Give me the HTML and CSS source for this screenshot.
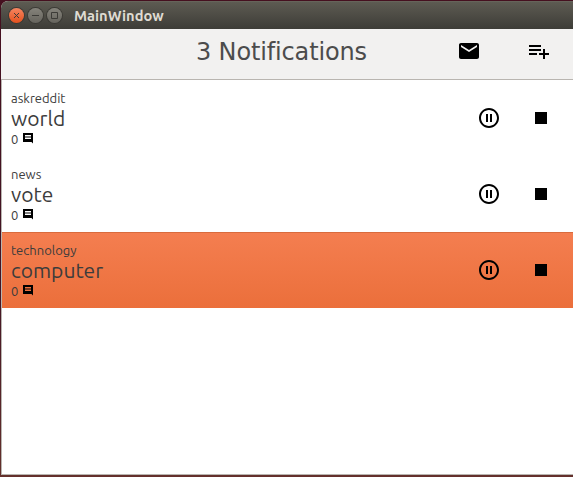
FILE: index.html
```html
<!DOCTYPE html>
<html lang="en">
<head>
<meta charset="utf-8">
<title>MainWindow</title>
<link rel="stylesheet" href="styles.css">
</head>
<body>
<svg class="defs" width="0" height="0">
  <symbol id="comment" viewBox="0 0 12 12"><path fill-rule="evenodd" d="M1 1h10v10.500L9.500 10H1zM3 3v1h6V3zM3 4.500v1h6v-1zM3 6v1h6V6z"/></symbol>
  <symbol id="pause" viewBox="0 0 24 24"><path d="M9 16h2V8H9v8zm3-14C6.480 2 2 6.480 2 12s4.480 10 10 10 10-4.480 10-10S17.520 2 12 2zm0 18c-4.410 0-8-3.590-8-8s3.590-8 8-8 8 3.590 8 8-3.590 8-8 8zm1-4h2V8h-2v8z"/></symbol>
  <symbol id="stop" viewBox="0 0 24 24"><path d="M6 6h12v12H6z"/></symbol>
</svg>
<div class="window">
  <header class="titlebar">
    <span class="button close"><svg viewBox="0 0 15 15"><path d="M5 5l5 5m0-5l-5 5"/></svg></span>
    <span class="button"><svg viewBox="0 0 15 15"><path d="M4 7.500h7"/></svg></span>
    <span class="button"><svg viewBox="0 0 15 15"><path d="M4.500 4.500h6v6h-6z"/></svg></span>
    <span class="caption">MainWindow</span>
  </header>
  <div class="toolbar">
    <h1 class="heading">3 Notifications</h1>
    <svg class="icon" viewBox="0 0 24 24"><path d="M20 4H4c-1.100 0-1.990.9-1.990 2L2 18c0 1.100.9 2 2 2h16c1.100 0 2-.9 2-2V6c0-1.100-.9-2-2-2zm0 4l-8 5-8-5V6l8 5 8-5v2z"/></svg>
    <svg class="icon add" viewBox="0 0 24 24"><path d="M14 10H2v2h12v-2zm0-4H2v2h12V6zm4 8v-4h-2v4h-4v2h4v4h2v-4h4v-2h-4zM2 16h8v-2H2v2z"/></svg>
  </div>
  <main class="list">
    <div class="row">
      <div class="info">
        <div class="source">askreddit</div>
        <div class="term">world</div>
        <div class="count">0<svg><use href="#comment"/></svg></div>
      </div>
      <svg class="icon"><use href="#pause"/></svg>
      <svg class="icon stop"><use href="#stop"/></svg>
    </div>
    <div class="row">
      <div class="info">
        <div class="source">news</div>
        <div class="term">vote</div>
        <div class="count">0<svg><use href="#comment"/></svg></div>
      </div>
      <svg class="icon"><use href="#pause"/></svg>
      <svg class="icon stop"><use href="#stop"/></svg>
    </div>
    <div class="row selected">
      <div class="info">
        <div class="source">technology</div>
        <div class="term">computer</div>
        <div class="count">0<svg><use href="#comment"/></svg></div>
      </div>
      <svg class="icon"><use href="#pause"/></svg>
      <svg class="icon stop"><use href="#stop"/></svg>
    </div>
  </main>
</div>
</body>
</html>
```
FILE: styles.css
```css
* { box-sizing: border-box; }
body {
  margin: 0;
  height: 477px;
  padding: 1px 0 2px 1px;
  overflow: hidden;
  background: linear-gradient(#45101f, #431424 60%, #64302c);
  color: #3c3c3c;
  font-family: Ubuntu, "Noto Sans", sans-serif;
}
.defs { display: block; }
.window {
  height: 474px;
  display: flex;
  flex-direction: column;
  border-top-left-radius: 7px;
  overflow: hidden;
  background: #f2f1f0;
}
.titlebar {
  height: 28px;
  flex: none;
  display: flex;
  align-items: center;
  gap: 4px;
  padding: 0 0 0 8px;
  background: linear-gradient(#5d5b52, #3d3c37);
  border-top: 1px solid #66645a;
}
.button {
  width: 15px;
  height: 15px;
  border-radius: 50%;
  background: linear-gradient(#85837b, #66645d);
  box-shadow: 0 0 0 1px #3b3a35;
}
.button svg { display: block; width: 15px; height: 15px; fill: none; stroke: #3c3b37; }
.close { background: linear-gradient(#f58561, #e4511d); }
.caption {
  margin: 1px 0 0 8px;
  color: #dfdbd2;
  font-size: 14.67px;
  font-weight: 700;
  line-height: 20px;
}
.toolbar {
  height: 50px;
  flex: none;
  display: flex;
  align-items: center;
  padding: 0 22px 6px 195px;
}
.heading {
  flex: 1;
  margin: 2px 0 0;
  color: #4c4c4c;
  font: 400 24px/30px "DejaVu Sans", sans-serif;
  letter-spacing: -0.15px;
  white-space: nowrap;
}
.icon { width: 24px; height: 24px; flex: none; fill: #000; }
.add { margin-left: 46px; }
.list {
  flex: 1;
  background: #fff;
  border: 1px solid #b9b5b0;
  border-right: 0;
}
.row {
  height: 76px;
  display: flex;
  align-items: center;
  padding: 0 20px 0 9px;
}
.selected {
  background: linear-gradient(#f47e50, #eb6f3b);
  border-top: 1px solid #d96b3d;
}
.info { flex: 1; height: 60px; }
.selected .info { margin-top: -1px; }
.selected .icon { margin-top: -1px; }
.source { font-size: 13px; line-height: 20px; }
.term { font-size: 21px; line-height: 20px; }
.count { display: flex; margin-top: 2px; font-size: 13px; line-height: 18px; }
.count svg { width: 12px; height: 12px; margin: 2px 0 0 4px; }
.stop { margin-left: 28px; }
```
